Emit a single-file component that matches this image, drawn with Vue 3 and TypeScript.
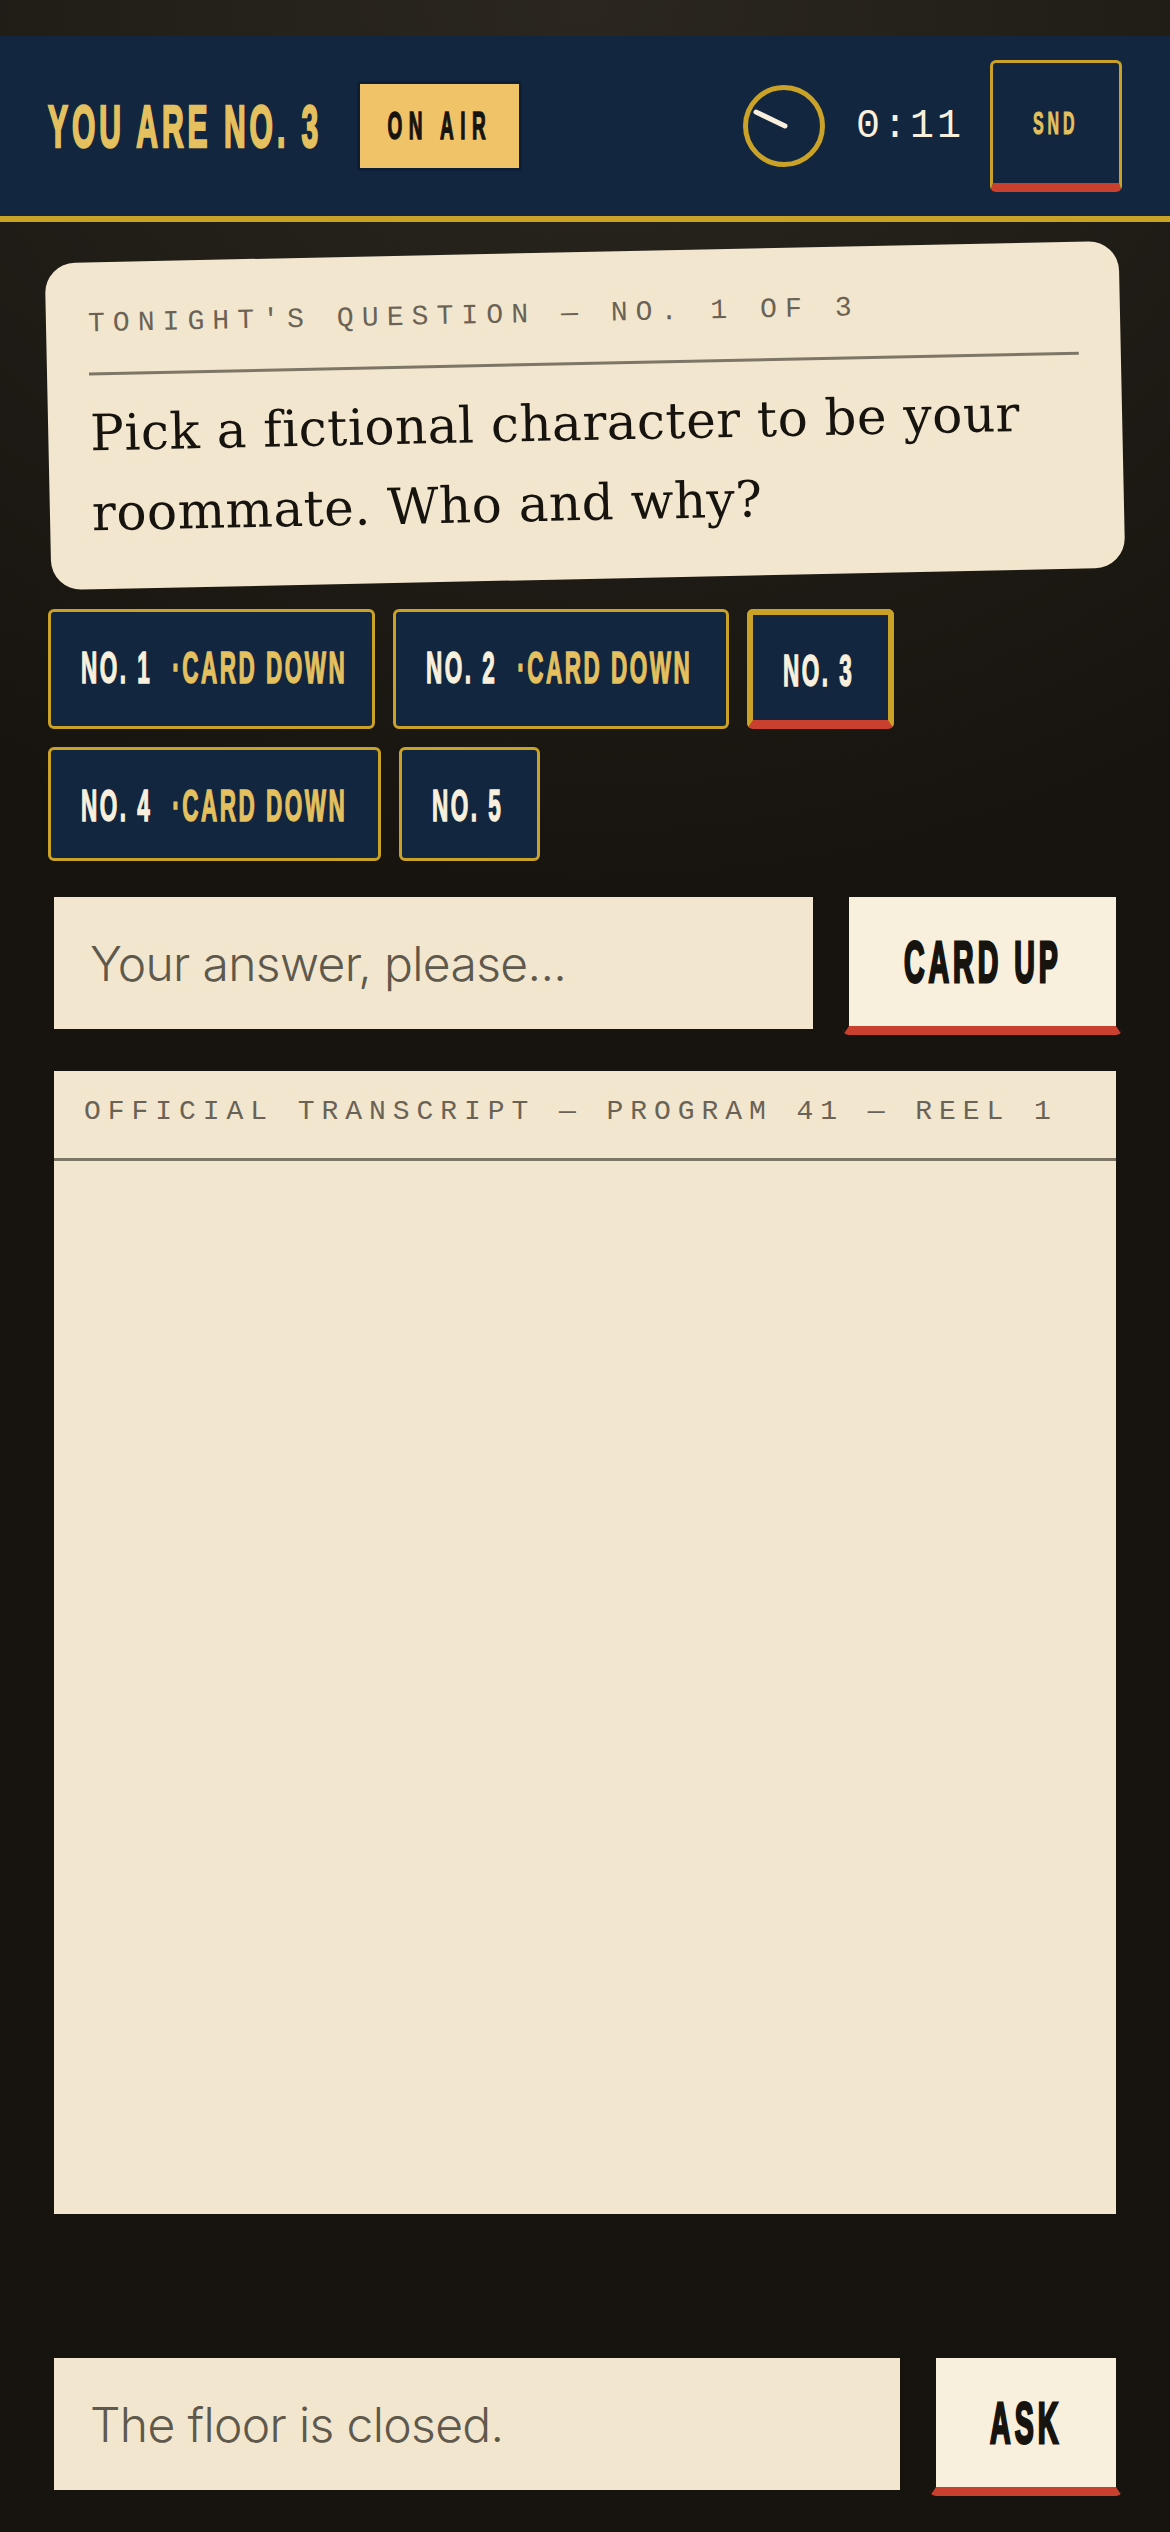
<template>
  <div class="screen">
    <header class="topbar">
      <div class="who">
        <span class="title">YOU ARE NO. 3</span>
        <span class="on-air"><span class="on-air-text">ON AIR</span></span>
      </div>
      <div class="controls">
        <svg class="clock" width="84" height="84" viewBox="0 0 84 84">
          <circle cx="42" cy="42" r="38.5" fill="none" stroke="#c9a227" stroke-width="5" />
          <line x1="43" y1="42" x2="14" y2="28" stroke="#f8f0dd" stroke-width="5" stroke-linecap="round" />
        </svg>
        <span class="time">0:11</span>
        <button class="snd" type="button"><span class="snd-text">SND</span></button>
      </div>
    </header>

    <main class="stage">
      <section class="question">
        <div class="question-label">TONIGHT'S QUESTION — NO. 1 OF 3</div>
        <p class="question-text">Pick a fictional character to be your<br />roommate. Who and why?</p>
      </section>

      <div class="chips">
        <div
          v-for="p in players"
          :key="p.name"
          class="chip"
          :class="{ current: p.current }"
          :style="{ width: p.width + 'px' }"
        >
          <span class="chip-text">{{ p.name }}<em v-if="p.down" class="down">·CARD DOWN</em></span>
        </div>
      </div>

      <form class="entry" @submit.prevent>
        <input class="field" type="text" placeholder="Your answer, please..." />
        <button class="action card-up" type="submit"><span class="action-text">CARD UP</span></button>
      </form>

      <section class="transcript">
        <div class="transcript-head">OFFICIAL TRANSCRIPT — PROGRAM 41 — REEL 1</div>
      </section>

      <form class="entry composer" @submit.prevent>
        <input class="field" type="text" placeholder="The floor is closed." disabled />
        <button class="action ask" type="submit"><span class="action-text">ASK</span></button>
      </form>
    </main>
  </div>
</template>

<script setup lang="ts">
interface Player {
  name: string
  width: number
  down?: boolean
  current?: boolean
}

const players: Player[] = [
  { name: 'NO. 1', width: 327, down: true },
  { name: 'NO. 2', width: 336, down: true },
  { name: 'NO. 3', width: 147, current: true },
  { name: 'NO. 4', width: 333, down: true },
  { name: 'NO. 5', width: 141 }
]
</script>

<style>
html,
body {
  margin: 0;
  background: #17140f;
}
</style>

<style scoped>
.screen {
  height: 2532px;
  box-sizing: border-box;
  padding-top: 36px;
  display: flex;
  flex-direction: column;
  overflow: hidden;
  background: radial-gradient(ellipse 1100px 900px at 50% 0, #2b2720, #17140f);
}

.topbar {
  height: 186px;
  box-sizing: border-box;
  flex: none;
  padding: 24px 48px;
  display: flex;
  align-items: center;
  justify-content: space-between;
  background: #12263f;
  border-bottom: 6px solid #c9a227;
}

.who,
.controls {
  display: flex;
  align-items: center;
}

.title {
  width: 309px;
  white-space: nowrap;
  font-family: "Liberation Sans Narrow", "Liberation Sans", sans-serif;
  font-weight: 700;
  font-size: 60px;
  letter-spacing: 8px;
  -webkit-text-stroke: 2.5px #e4c05e;
  color: #e4c05e;
  transform: scaleX(0.5);
  transform-origin: left center;
}

.on-air {
  width: 165px;
  height: 90px;
  box-sizing: border-box;
  display: flex;
  align-items: center;
  justify-content: center;
  background: #f0c368;
  border: 3px solid #0e1e35;
  border-radius: 3px;
}

.on-air-text {
  white-space: nowrap;
  font-family: "Liberation Sans Narrow", "Liberation Sans", sans-serif;
  font-weight: 700;
  font-size: 38px;
  letter-spacing: 13px;
  -webkit-text-stroke: 1.5px #17140f;
  color: #17140f;
  transform: scaleX(0.5);
}

.clock {
  margin-right: 30px;
  display: block;
}

.time {
  width: 104px;
  margin-right: 30px;
  font-family: "Liberation Mono", monospace;
  font-size: 40px;
  letter-spacing: 3px;
  color: #f8f0dd;
}

.snd {
  width: 132px;
  height: 132px;
  box-sizing: border-box;
  padding: 0;
  display: flex;
  align-items: center;
  justify-content: center;
  background: #12263f;
  border: 3px solid #c9a227;
  border-bottom: 9px solid #c9402f;
  border-radius: 6px;
}

.snd-text {
  font-family: "Liberation Sans Narrow", "Liberation Sans", sans-serif;
  font-weight: 700;
  font-size: 32px;
  letter-spacing: 8px;
  -webkit-text-stroke: 1px #e4c05e;
  color: #e4c05e;
  transform: scaleX(0.5);
}

.stage {
  flex: 1;
  min-height: 0;
  padding: 30px 48px 36px;
  display: flex;
  flex-direction: column;
  gap: 30px;
}

.question {
  flex: none;
  padding: 36px 42px;
  background: #f2e6cf;
  border-radius: 30px;
  transform: rotate(-1.2deg);
}

.question-label {
  padding-bottom: 22px;
  border-bottom: 3px solid #7d7566;
  font-family: "Liberation Mono", monospace;
  font-size: 28px;
  line-height: 52px;
  letter-spacing: 8.1px;
  white-space: nowrap;
  color: #6a6355;
}

.question-text {
  margin: 18px 0 0;
  font-family: "DejaVu Serif", serif;
  font-size: 50px;
  line-height: 80px;
  letter-spacing: 0.5px;
  white-space: nowrap;
  color: #17140f;
}

.chips {
  flex: none;
  display: flex;
  flex-wrap: wrap;
  gap: 18px;
}

.chip {
  box-sizing: border-box;
  padding: 20px 0 16px 30px;
  background: #12263f;
  border: 3px solid #c9a227;
  border-radius: 6px;
}

.chip.current {
  padding-bottom: 13px;
  border-width: 6px 6px 9px;
  border-bottom-color: #c9402f;
}

.chip-text {
  display: block;
  white-space: nowrap;
  font-family: "Liberation Sans Narrow", "Liberation Sans", sans-serif;
  font-weight: 700;
  font-size: 45px;
  line-height: 72px;
  letter-spacing: 5px;
  -webkit-text-stroke: 1.5px currentColor;
  color: #f8f0dd;
  transform: scaleX(0.5);
  transform-origin: left center;
}

.down {
  margin-left: 40px;
  font-style: normal;
  color: #e4c05e;
}

.entry {
  flex: none;
  display: flex;
  gap: 24px;
}

.field {
  flex: 1;
  min-width: 0;
  height: 144px;
  box-sizing: border-box;
  padding: 0 0 0 36px;
  background: #f2e6cf;
  border: 6px solid #17140f;
  border-radius: 0;
  outline: none;
  font-family: Inter, sans-serif;
  font-weight: 300;
  font-size: 48px;
  letter-spacing: -0.65px;
  color: #17140f;
}

.field::placeholder {
  color: #5f594d;
  opacity: 1;
}

.action {
  flex: none;
  height: 144px;
  box-sizing: border-box;
  padding: 0;
  display: flex;
  align-items: center;
  justify-content: center;
  background: #f8f0dd;
  border: 6px solid #17140f;
  border-bottom: 9px solid #c9402f;
  border-radius: 6px;
}

.card-up {
  width: 279px;
}

.ask {
  width: 192px;
}

.action-text {
  white-space: nowrap;
  font-family: "Liberation Sans Narrow", "Liberation Sans", sans-serif;
  font-weight: 700;
  font-size: 57px;
  letter-spacing: 8px;
  -webkit-text-stroke: 3px #17140f;
  color: #17140f;
  transform: scaleX(0.5);
}

.transcript {
  flex: 1;
  min-height: 0;
  background: #f2e6cf;
  border: 6px solid #17140f;
}

.transcript-head {
  padding: 0 0 5px 30px;
  border-bottom: 3px solid #7d7566;
  font-family: "Liberation Mono", monospace;
  font-size: 28px;
  line-height: 82px;
  letter-spacing: 6.95px;
  white-space: nowrap;
  color: #6a6355;
}

.composer {
  margin-top: 102px;
}
</style>
